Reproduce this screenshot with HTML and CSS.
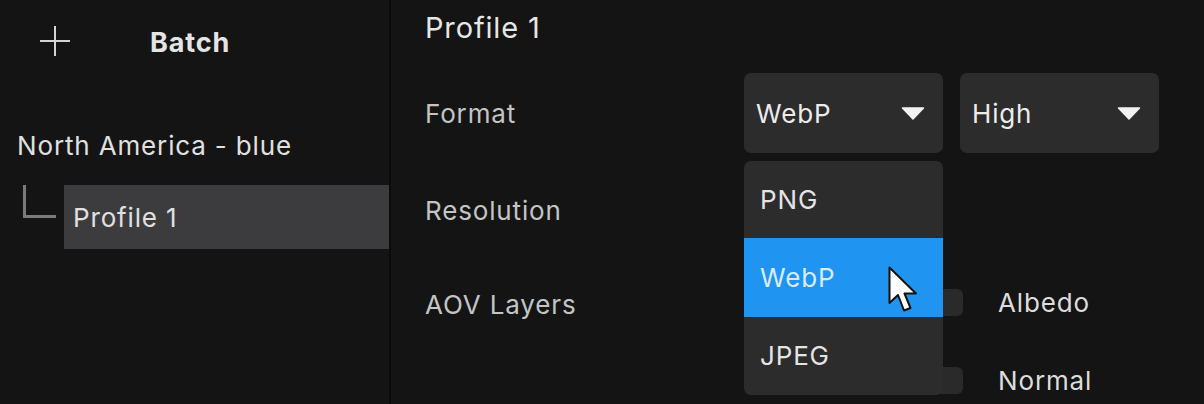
FILE: index.html
```html
<!DOCTYPE html>
<html>
<head>
<meta charset="utf-8">
<link rel="stylesheet" href="styles.css">
</head>
<body>
<div class="app">
  <aside class="sidebar">
    <div class="side-head">
      <svg class="plus" width="32" height="32" viewBox="0 0 32 32"><path d="M16 1V31M1 16H31" stroke="#d4d4d4" stroke-width="2" fill="none"/></svg>
      <span class="batch">Batch</span>
    </div>
    <div class="group">North America - blue</div>
    <div class="tree-row">
      <span class="connector"></span>
      <div class="item selected">Profile 1</div>
    </div>
  </aside>
  <main class="panel">
    <h1 class="title">Profile 1</h1>
    <div class="form">
      <div class="row row-format">
        <div class="label">Format</div>
        <div class="select"><span>WebP</span><svg class="caret" width="24" height="13" viewBox="0 0 24 13"><path d="M1.5 1H22.5L12 12Z" fill="#f2f2f2" stroke="#f2f2f2" stroke-width="1.5" stroke-linejoin="round"/></svg></div>
        <div class="select"><span>High</span><svg class="caret" width="24" height="13" viewBox="0 0 24 13"><path d="M1.5 1H22.5L12 12Z" fill="#f2f2f2" stroke="#f2f2f2" stroke-width="1.5" stroke-linejoin="round"/></svg></div>
      </div>
      <div class="row row-res">
        <div class="label">Resolution</div>
        <div class="select hidden-select"></div>
      </div>
      <div class="row row-aov">
        <div class="label">AOV Layers</div>
        <ul class="checks">
          <li><span class="box"></span><span>Albedo</span></li>
          <li><span class="box"></span><span>Normal</span></li>
        </ul>
      </div>
    </div>
  </main>
  <div class="menu">
    <div class="opt">PNG</div>
    <div class="opt active">WebP</div>
    <div class="opt">JPEG</div>
    <svg class="cursor" width="31" height="48" viewBox="0 0 31 48"><path d="M1.5 1.5V37L10 29L16 44.5L22.5 42L16.5 27.5H28Z" fill="#ffffff" stroke="#111111" stroke-width="2" stroke-linejoin="round"/></svg>
  </div>
</div>
</body>
</html>
```

FILE: styles.css
```css
* { box-sizing: border-box; margin: 0; padding: 0; }
html, body { width: 1204px; height: 404px; overflow: hidden; background: #141414; }
body { font-family: Inter, "Noto Sans", "Liberation Sans", sans-serif; color: #e2e2e2; letter-spacing: 0.85px; }
.app { position: relative; display: flex; width: 1204px; height: 404px; }

.sidebar { width: 391px; flex: none; border-right: 2px solid #0b0b0b; background: #141414; }
.side-head { height: 84px; display: flex; align-items: center; padding-left: 39px; }
.plus { display: block; margin-top: -3px; }
.batch { margin-left: 79px; font-size: 27px; font-weight: 700; color: #e4e4e4; }
.group { margin-top: 46px; padding-left: 17px; font-size: 26px; line-height: 32px; color: #e0e0e0; }
.tree-row { margin-top: 23px; display: flex; height: 64px; }
.connector { width: 33px; height: 33px; margin-left: 23px; margin-right: 8px; border-left: 3px solid #7a7a7a; border-bottom: 3px solid #7a7a7a; flex: none; }
.item { flex: 1; display: flex; align-items: center; padding-left: 9px; font-size: 26px; color: #e0e0e0; }
.item.selected { background: #3c3c3e; }

.panel { flex: 1; padding-left: 34px; }
.title { font-size: 29px; font-weight: 400; line-height: 34px; margin-top: 11px; color: #e6e6e6; }
.form { margin-top: 28px; }
.row { display: grid; grid-template-columns: 302px 199px 199px; column-gap: 17px; }
.row-format { height: 80px; align-items: center; }
.row-res { margin-top: 8px; height: 98px; align-items: center; }
.row-aov { align-items: start; }
.label { font-size: 26px; color: #c4c4c4; }
.row-aov .label { line-height: 78px; margin-top: 7px; }
.select { height: 80px; background: #2c2c2c; border-radius: 7px; display: flex; align-items: center; justify-content: space-between; padding: 0 18px 0 12px; font-size: 26px; color: #ececec; }
.hidden-select { height: 80px; }
.checks { list-style: none; grid-column: 2 / 4; margin-top: 4px; }
.checks li { height: 78px; display: flex; align-items: center; font-size: 26px; color: #dcdcdc; }
.box { width: 28px; height: 27px; border-radius: 6px; background: #2a2a2a; margin-left: 191px; margin-right: 35px; }

.menu { position: absolute; left: 744px; top: 161px; width: 199px; height: 234px; background: #2c2c2c; border-radius: 7px; overflow: visible; }
.opt { height: 77px; display: flex; align-items: center; padding-left: 16px; font-size: 26px; color: #e4e4e4; }
.opt.active { height: 79px; background: #1f95f1; color: #dbeaf8; }
.cursor { position: absolute; left: 144px; top: 105px; }
```
